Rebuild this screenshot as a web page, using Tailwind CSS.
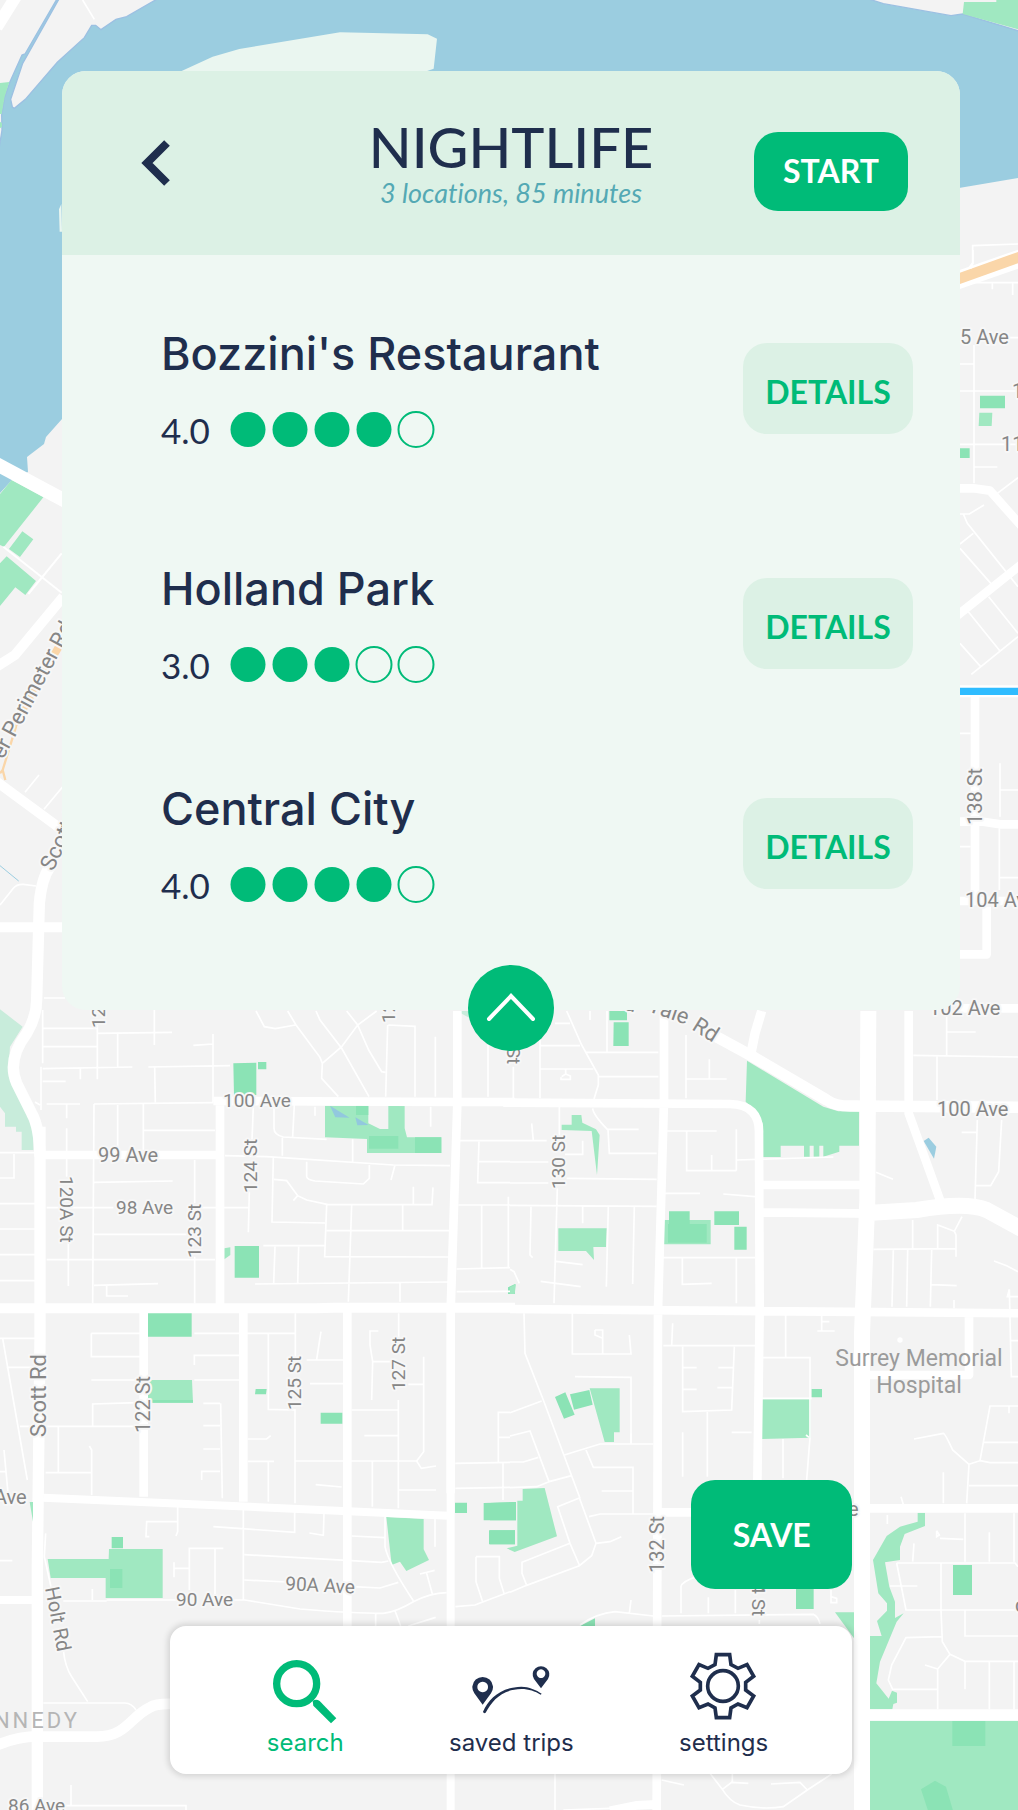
<!DOCTYPE html>
<html lang="en">
<head>
<meta charset="utf-8">
<meta name="viewport" content="width=device-width, initial-scale=1">
<title>Nightlife trip</title>
<script src="https://cdn.jsdelivr.net/npm/@tailwindcss/browser@4"></script>
</head>
<body class="bg-[#f3f3f3] font-['Inter',sans-serif] text-[#1f2e4d]">
<div class="relative isolate flex min-h-screen flex-col overflow-hidden pr-[58px] pl-[62px]">

  <!-- Map backdrop -->
  <svg class="absolute inset-0 -z-10 h-full w-full" viewBox="0 0 1018 1810" preserveAspectRatio="xMidYMid slice" fill="none" aria-label="Map of Surrey">
    <rect width="1018" height="1810" fill="#f3f3f3"/>
    <path fill="#9bcde0" d="M0 0H1018V178L900 198L62 419L46 437L44 444L27 457L28 472L12 480L0 493Z"/>

    <!-- north west shore -->
    <g transform="scale(.33333)">
      <g fill="#f3f3f3" stroke="#9cc0e2" stroke-width="4">
        <path d="M-5 -5H172L75 162L66 165L30 245L14 290L5 345L6 390L-5 460Z"/>
        <path d="M178 -5H475L380 50L348 58L303 89L287 76H275L253 113L172 187L76 298L43 325L37 321L32 298L68 190Z"/>
      </g>
      <path fill="#eaf6f0" d="M540 215L638 170L718 147L1020 97L1283 103L1311 116L1301 206L1275 215ZM184 612L177 628L179 695H186Z"/>
      <path fill="#a0e8c1" d="M0 249L28 246L14 290L5 342H0ZM0 365L6 370V380L0 385Z"/>
      <path stroke="#fff" stroke-width="36" d="M60 -30L-10 82"/>
      <path stroke="#fff" stroke-width="5" d="M248 0L283 58"/>
    </g>

    <!-- north east shore -->
    <g transform="translate(640 0) scale(.33333)">
      <path fill="#f3f3f3" stroke="#9cc0e2" stroke-width="4" d="M680 -5L730 11L933 47L968 42L1140 94V-5Z"/>
      <path fill="#a0e8c1" d="M972 6H1069V-3H1134V88L968 42Z"/>
      <g stroke="#fff"><path stroke-width="5" d="M1134 732L998 737V788L985 806M985 848H1134"/><path stroke-width="54" d="M940 845L1150 772"/></g>
      <path stroke="#fad6a9" stroke-width="32" d="M940 842L1150 767"/>
    </g>

    <!-- west edge -->
    <g transform="translate(0 250) scale(.33333)">
      <path fill="#a0e8c1" d="M35 690L130 742L12 890L0 885V732ZM67 844L100 868L60 921L27 897ZM20 919L108 993L76 1035L46 1012L0 1068V940Z"/>
      <g stroke="#fff">
        <path stroke-width="42" d="M-20 637L200 755"/>
        <path stroke-width="6" d="M10 890L185 1028M185 910L85 1032"/>
        <path stroke-width="30" d="M190 1040L45 1215L-10 1250"/>
      </g>
      <path fill="#fad6a9" d="M180 1160L90 1320L60 1390L70 1400L112 1320L190 1190Z"/>
    </g>
    <g transform="translate(0 690) scale(.33333)">
      <path stroke="#fad6a9" stroke-width="16" d="M100 10L30 130"/>
      <path stroke="#fad6a9" stroke-width="7" d="M48 110L8 240L0 250M8 240L16 270"/>
      <path stroke="#9bcde0" stroke-width="3" d="M0 527L56 573"/>
      <path fill="#c8ecdb" d="M0 958L68 1010L30 1070L25 1140L60 1200L100 1290V1380H65V1325H48V1310H15V1270L0 1250Z"/>
      <g stroke="#fff" stroke-linejoin="round">
        <path stroke-width="30" d="M-10 275L190 422M0 712H190"/>
        <path stroke-width="34" d="M150 530Q125 565 118 640L110 930Q110 980 80 1030Q20 1110 50 1180L95 1270Q118 1310 120 1400"/>
        <path stroke-width="5" d="M75 307L117 255M132 358L190 288M0 645L40 595Q50 582 70 583L108 588M132 924H195"/>
      </g>
    </g>

    <!-- east edge -->
    <g transform="translate(510 250) scale(.33333)">
      <path fill="#8be3b5" d="M1410 437H1485V475H1410ZM1340 595H1379V624H1340Z"/>
      <path fill="#a0e8c1" d="M1408 488H1447L1445 528H1406Z"/>
      <g stroke="#fff">
        <path stroke-width="5" d="M1389 0V40L1382 55M1447 100V118M1508 100V135M1486 263H1524M1392 285V700M1350 342H1392M1350 423H1524M1350 583H1524M1392 651H1462M1524 683L1462 730M1350 792H1378L1422 765M1360 792L1372 820L1524 1010M1350 882L1390 850M1350 895L1445 1003M1436 1040L1524 1150M1375 1085L1470 1203M1350 1180L1412 1250M1384 1273L1524 1160"/>
        <path stroke-width="26" stroke-linejoin="round" d="M1340 715H1390L1440 722L1540 835M1340 1098L1540 938"/>
        <path stroke-width="36" d="M1340 1324H1540"/>
      </g>
      <path stroke="#2fbcff" stroke-width="22" d="M1340 1324H1540"/>
    </g>
    <g transform="translate(510 690) scale(.33333)" stroke="#fff">
      <path stroke-width="26" stroke-linejoin="round" d="M1395 20V640M1340 395H1420L1470 403H1540M1340 633H1540M1430 650V793H1340"/>
      <path stroke-width="26" d="M1340 955H1540"/>
      <path stroke-width="5" d="M1470 220V380M1470 300H1524M1468 415V600M1468 563H1524M1350 130H1382M1350 470H1382"/>
    </g>

    <!-- central west blocks -->
    <g transform="translate(0 1000) scale(.33333)">
      <path fill="#a0e8c1" d="M975 317H1105V370L1140 387H1165V317H1214V385L1221 412H1324V459H1101V417L975 412ZM673 745L691 742V765L673 778ZM444 1140H576L579 1208H444Z"/>
      <path fill="#8be3b5" d="M700 190L769 188V285H702ZM774 186H799V208H774ZM1068 317H1105V345H1068ZM1107 408H1195V446H1107ZM1245 412H1324V459H1245ZM704 738H777V833H704ZM444 939H575V1010H444ZM767 1167H800L798 1183H765ZM1524 862L1545 852V882H1524Z"/>
      <path fill="#c8ecdb" d="M1370 33L1420 60V33Z"/>
      <path fill="#92c8de" d="M990 317L1049 353L1006 352ZM1066 352L1106 375L1072 376Z"/>
      <g stroke="#fff" stroke-width="5">
        <path d="M128 85H292M292 60V238M128 30V190M128 140H290M292 100L516 97M353 100V200M463 30V135M128 206L397 201M445 201L690 197M241 205V238M128 244H197M580 136L639 132M639 102V305M464 200L466 307M123 200V330M105 306L120 315M140 312H240M282 312L640 308M200 312V355M200 385V460M282 312L278 910M353 315V450M430 312V450M432 391H645M200 475V530M205 720V858M140 623H340M282 547L518 543M584 480V610M584 770V910M600 623H745M282 703H560M140 779H645M282 856L474 851M320 856V888H384M0 458H105M42 462V534H0M0 611H105M0 687H105M0 764H105M0 842H105"/>
        <path d="M768 33L793 80L826 86L886 75M863 33L888 75L960 172L967 190L965 235L1015 290M948 33L960 60L1025 145L1107 290M1130 33L1073 75L1025 140L967 190M1040 33L1073 75L1106 150L1145 215L1156 217M1163 75L1157 290M1165 75L1245 79V290M1306 110V290M760 320L756 420M748 575L745 697M883 315L878 410M822 320V385Q822 405 850 411L980 418M945 320V347M1292 320V380M675 467L800 470L1180 495L1350 497M847 413V467M1058 418V487M820 472L816 666L975 669M822 538L860 542L893 587L920 600L985 614H1296L1299 562M893 587L880 602M920 485V530Q922 540 945 543L1090 552L1108 535V495M1185 495L1173 540M1240 560V612M980 615L974 770L1345 771M790 737L975 737M980 692H1348M1055 615L1045 905M1208 615V690M825 740L821 850M896 740L893 850M765 852L1345 846M1200 850V905"/>
        <path d="M1380 422H1530M1437 425L1433 548H1530M1437 485H1530M1375 615H1530M1445 615V805M1370 807L1530 803M1525 590V800M1370 875L1530 874M1464 50V290"/>
        <path d="M274 1000H420M274 1000V1070H420M274 1140H420M583 1000H885M583 1095V1066H720M583 1140H720M886 940V1100M805 1000V1200M0 1015H105M8 1015L40 1200L82 1440M20 1102H105M963 995L950 1078M920 1080H1030M1135 993H1110V1035L1118 1085L1115 1200M1118 1085H1180M1196 940V1020M1271 1070V1200M930 1151H1030M1225 1153H1271"/>
      </g>
      <g stroke="#fff">
        <path stroke-width="26" d="M640 303L1380 306H1545M130 465H660M660 305V925M1372 33V310L1352 930V1480M431 930V1490M730 935V1505M1042 935V2020"/>
        <path stroke-width="30" d="M0 925H950L1000 923H1545"/>
        <path stroke-width="34" d="M120 380V1020L112 1700V2450"/>
      </g>
    </g>

    <!-- central east blocks -->
    <g transform="translate(510 1000) scale(.33333)">
      <path fill="#a0e8c1" d="M711 182L940 320L985 334H1047V437H988V455L940 470V437H928V470H911V437H899V470H882V437H812V471H758V370L740 335L707 305ZM155 374H185V345H214L217 368L258 388L269 405L261 525L245 393L155 390ZM145 685H290L288 741H250L252 780L228 753H145ZM462 660H602V733H462ZM239 1165H329V1297H312V1326H284ZM752 1198H902V1313L752 1317ZM0 862L18 852L14 882H0Z"/>
      <path fill="#8be3b5" d="M298 33H351V61H298ZM311 67H356V138H310ZM477 634H539V672H590V728H474V672H477ZM613 634H687V675H613ZM673 680H710V749H673ZM905 1167H936V1192H905ZM135 1191L166 1177L194 1244L162 1256ZM180 1183L238 1170L248 1214L192 1229Z"/>
      <path fill="#9bcde0" d="M1241 423L1256 413L1279 440L1272 476Z"/>
      <g stroke="#fff" stroke-width="5">
        <path d="M170 33L215 135L265 225V255L252 297M90 60V295M90 137H210M90 207H250M135 70H180M240 33V60M291 33V155M225 157H445M265 230H445M10 200V295M528 105V295M528 237H650M598 178V237M153 232V238H181V228L167 222L155 230M167 205V222M148 320V410M248 325Q250 345 292 388H386M294 388L298 460H440M65 370L70 422M0 422H110M218 422V463H165M0 486H115M170 535L440 538M0 549H115M0 616L440 619M142 565L132 910M63 620L60 765L68 773M218 620V670M295 620L289 860M373 620L368 852M138 784L218 794M92 844L212 860M0 808L12 815L28 850M470 393H620M530 395V512H679M679 388V512M605 465V510M680 480L970 471M465 580H570M640 582L735 590M460 773H735M517 773V853L605 850M679 773V910"/>
        <path d="M1310 40V165M1310 96H1397M1210 166L1524 171M1281 168V300M1402 360L1395 600M1355 397H1402M1475 360L1466 515L1442 557H1397M1098 517L1149 538M1090 748L1337 746M1208 660V745M1283 745V675L1333 694L1356 650M1333 694L1338 705V770M1150 750L1146 920M1193 750L1190 920M1265 750L1261 920M1265 854L1340 857M1332 900V925M1452 783L1490 797L1524 815M1498 868L1492 890H1524M1498 868L1504 1130H1524M1504 1022H1524"/>
        <path d="M42 940L45 1060L100 1200L210 1495M187 940V1062H363L358 1005M255 990V1005L278 1015V1060M255 990H278V1015M195 1130L363 1132V1330M488 970L485 1037M460 1037H735M518 1040V1235L665 1230L673 1040M518 1103H560M625 1103H670M518 1168H560M622 1163H670M827 940V1073M755 1073H900V1313L890 1440M935 945V992M935 965H958M922 993H974M752 1195H905"/>
      </g>
      <circle cx="1170" cy="1020" r="8" fill="#fff"/>
      <g stroke="#fff" stroke-linejoin="round">
        <path stroke-width="26" d="M-20 308L660 312Q750 315 747 400L749 930L740 1600M462 33V300L444 930L440 2450M0 927L1540 940M760 555H1060M760 637L1100 641M1196 33V340L1292 605M1377 950V1125H1060"/>
        <path stroke-width="28" d="M755 33L735 100L722 165"/>
        <path stroke-width="34" d="M600 100L720 165L950 300Q975 318 1020 318L1540 322"/>
        <path stroke-width="48" d="M1075 33L1072 600L1056 1000V2450M1085 638L1220 630Q1370 605 1430 630L1540 690"/>
      </g>
    </g>

    <!-- southern west blocks -->
    <g transform="translate(0 1400) scale(.33333)">
      <path fill="#a0e8c1" d="M143 477H326L327 447H488V594H317V534H152ZM1159 351L1271 357V448L1287 480L1219 513L1200 485L1175 495ZM89 306H99V365Z"/>
      <path fill="#8be3b5" d="M335 411H369V445H335ZM330 507H367V564H330ZM962 38H1027V71H962ZM1365 308H1401V339H1365ZM458 0H579V8H458ZM1451 309L1548 306V361H1451ZM1467 391H1545V433H1467Z"/>
      <g stroke="#fff" stroke-width="5">
        <path d="M60 79H410M278 79V12L415 8M175 80V215M137 218H275M275 285V150L268 138M0 215H18L12 150L25 290M610 10H660M662 10L667 295M610 77H660M610 147H660M605 240V214H660M743 117H800L812 107M743 184H822M805 185V305M805 0V28L885 30V310M885 183H1250L1264 205L1308 198M1250 183L1271 155V0M1055 30H1195M1195 0V325M1093 107H1195M1117 185V320M1195 270H1308M947 254L1025 261M1366 190L1530 187M1366 265L1530 262M1530 37H1495V185M1495 112H1530M1509 190V300"/>
        <path d="M533 320V395L528 408M533 365H440L438 410H448M640 380L884 397V335M730 325V598M972 340L970 406L928 399M1055 408L1155 413M733 464L1145 487L1165 483M1155 350V440Q1165 490 1240 602M733 540L860 546M1060 560L1140 564L1195 547M670 445H568V570M645 445V585M522 487V532M522 505H568M1305 357V440M190 603H320M277 567V600M320 600H530M690 600H735L900 627Q1060 640 1150 640Q1190 635 1240 605Q1290 580 1340 578M1260 522L1304 511M1280 520L1297 582M1127 640V680M1185 632L1202 678M1225 678L1307 652M1366 620L1425 615L1450 605L1530 575M1428 470H1498V535L1512 580M1428 470V545L1448 605M0 482H37M137 400L133 470L155 570M190 750Q195 800 215 830L263 905M130 909H375Q395 910 408 930M213 1155V1217M130 1217H558V1230"/>
      </g>
      <g stroke="#fff">
        <path stroke-width="24" d="M130 293L1345 347M0 600H110M1352 0V680M1352 1115V1235"/>
        <path stroke-width="32" d="M-20 1040Q60 1005 130 1010H290C380 1010 390 950 450 922Q470 910 520 912"/>
      </g>
    </g>

    <!-- southern east blocks -->
    <g transform="translate(510 1400) scale(.33333)">
      <path fill="#a0e8c1" d="M38 267L104 264L141 409L14 456L-10 445L22 437V302H38ZM1223 338H1245V378L1184 402L1170 440V480L1125 487L1138 560L1155 605V654L1181 640L1160 665L1110 785L1099 850L1136 896L1146 872L1161 878V908L1150 912L1147 928H1080V708H1115L1101 663L1131 632V610L1105 580L1089 480L1130 408L1170 380L1223 365ZM1080 962H1540V1240H1080ZM975 637H1032V715Z"/>
      <path fill="#8be3b5" d="M-60 309L18 306V361H-60ZM-60 391H15V433H-60ZM1329 495H1386V585H1329ZM1327 963H1426V1038H1327ZM858 560H911V627H858ZM210 678L255 655V678ZM1233 1168L1275 1142L1308 1160L1330 1235H1255Z"/>
      <g stroke="#fff" stroke-width="5">
        <path d="M0 38L95 3M0 108L60 93L117 245L185 227M0 186H40L85 172M0 263L80 260L117 245M163 165L270 132H430M228 150L250 202H369V340M275 273H369M363 100V130M210 293L143 320L180 430L208 495M208 293L258 430L245 467L208 497L50 556L36 520V487L180 430M258 430L300 425L334 410M237 350L270 342H430M0 577L50 556M518 97V230M592 35V230M665 97H725M819 117V235M888 105L897 112"/>
        <path d="M513 640V560Q515 545 560 530M595 592V640M676 570V640M455 648L910 643Q925 650 930 672M363 600L358 640M210 675Q260 640 315 635L430 648M963 570V608H980V595L963 590M748 660V672"/>
        <path d="M1212 117L1300 100Q1305 100 1328 150L1377 193L1370 310M1377 193L1410 182L1440 18H1524M1410 182L1440 188H1524M1420 127H1524M1377 257H1524M1300 217V310M1497 18V40M1173 290L1182 320M1132 345V372M1365 340V485M1280 392V410L1288 405L1280 392M1290 415L1360 418M1212 430L1208 485M1160 489H1515L1524 500M1160 489L1188 630H1524M1140 558H1222M1293 490V630L1297 725L1320 763L1283 807V928M1438 397V485M1512 340V485M1365 632V708H1524M1297 710L1188 713L1145 795L1135 840L1148 868H1283M1320 763L1365 784H1524M1365 784V868M1245 795L1283 807M1438 784V928M1512 784V928"/>
        <path d="M455 1140L522 1155M600 1120L637 1168L665 1147L715 1150M667 1120V1147M637 1168Q660 1205 690 1215Q760 1230 820 1220L892 1170L965 1122M783 1152L870 1147L892 1170M135 1120V1230M160 1230L300 1225"/>
      </g>
      <path stroke="#fff" stroke-width="26" d="M300 1232L380 1216L440 1213M450 337H560M1075 325H1540"/>
      <path stroke="#fff" stroke-width="34" d="M1075 945H1540"/>
    </g>

    <!-- street names -->
    <g class="font-['Roboto',sans-serif]" fill="#868686" stroke="#f7f7f7" stroke-width="4" stroke-linejoin="round" paint-order="stroke">
      <g class="text-[20px]">
        <text x="960" y="344">5 Ave</text>
        <text x="1012" y="398">1</text>
        <text x="1001" y="451">11</text>
        <text x="965" y="907">104 Ave</text>
        <text x="929" y="1015">102 Ave</text>
        <text x="937" y="1116">100 Ave</text>
        <text x="98" y="1162">99 Ave</text>
        <text x="-6" y="1504">Ave</text>
        <text x="848" y="1516">e</text>
        <text x="1015" y="1612">c</text>
        <text transform="translate(982 825) rotate(-90)">138 St</text>
        <text transform="translate(150 1433) rotate(-90)">122 St</text>
        <text transform="translate(664 1573) rotate(-90)">132 St</text>
        <text transform="translate(45 1588) rotate(79)">Holt Rd</text>
        <text transform="translate(-5 1448) rotate(-97)">St</text>
      </g>
      <g class="text-[19px]">
        <text x="223" y="1107">100 Ave</text>
        <text x="116" y="1214">98 Ave</text>
        <text x="176" y="1606">90 Ave</text>
        <text x="285" y="1590" transform="rotate(3 285 1590)">90A Ave</text>
        <text x="8" y="1812">86 Ave</text>
        <text transform="translate(257 1193) rotate(-90)">124 St</text>
        <text transform="translate(201 1258) rotate(-90)">123 St</text>
        <text transform="translate(60 1176) rotate(90)">120A St</text>
        <text transform="translate(565 1189) rotate(-90)">130 St</text>
        <text transform="translate(301 1410) rotate(-90)">125 St</text>
        <text transform="translate(405 1391) rotate(-90)">127 St</text>
        <text transform="translate(752 1562) rotate(90)">134 St</text>
        <text transform="translate(507 1010) rotate(90)">128 St</text>
        <text transform="translate(105 1028) rotate(-90)">121 St</text>
        <text transform="translate(395 1023) rotate(-90)">126 St</text>
      </g>
      <g class="text-[22px]">
        <text transform="translate(46 1437) rotate(-90)">Scott Rd</text>
        <text transform="translate(53 872) rotate(-65)">Scott Rd</text>
        <text transform="translate(3 760) rotate(-62)">er Perimeter Rd</text>
        <text transform="translate(603 1004) rotate(15)">Old</text>
        <text transform="translate(647 1011) rotate(19)">Yale</text>
        <text transform="translate(691 1029) rotate(32)">Rd</text>
      </g>
    </g>
    <g class="font-['Roboto',sans-serif] text-[23px]" fill="#9b9b9b" text-anchor="middle">
      <text x="919" y="1366">Surrey Memorial</text>
      <text x="919" y="1393">Hospital</text>
    </g>
    <text class="font-['Roboto',sans-serif] text-[22px] tracking-[3px]" x="80" y="1728" fill="#b5b5b5" text-anchor="end">KENNEDY</text>
  </svg>

  <!-- Trip card -->
  <main class="relative mt-[71px] rounded-3xl bg-[#eff8f3]">
    <header class="grid h-[184px] grid-cols-[1fr_auto_1fr] items-center rounded-t-3xl bg-[#dcf1e5] px-[52px]">
      <button type="button" aria-label="Back" class="ml-[26px] justify-self-start">
        <svg class="h-12 w-8" viewBox="0 0 32 48" fill="none" stroke="#1f2e4d" stroke-width="8"><path d="M27 4L7 24L27 44"/></svg>
      </button>
      <div class="pt-1 text-center font-['Lato',sans-serif] [font-variant-ligatures:none]">
        <h1 class="text-[56px] leading-[56px] font-medium">NIGHTLIFE</h1>
        <p class="text-[27px] leading-9 text-[#54a9b4] italic">3 locations, 85 minutes</p>
      </div>
      <button type="button" class="mt-4 h-[79px] w-[154px] justify-self-end rounded-3xl bg-[#00bb78] font-['Lato',sans-serif] text-[32px] font-bold text-white">START</button>
    </header>

    <ul class="flex flex-col pt-[73px] pr-[47px] pb-[107px] pl-[99px]">
      <li class="flex items-center justify-between">
        <div>
          <h2 class="text-[45px] leading-[52px] font-medium">Bozzini's Restaurant</h2>
          <div class="mt-[31px] flex items-center" role="img" aria-label="4 out of 5">
            <span class="w-[69px] font-['Lato',sans-serif] text-[35px] leading-9">4.0</span>
            <svg class="h-[37px] w-[206px]" viewBox="0 0 206 37" fill="#00bb78"><circle cx="18" cy="18.500" r="17.500"/><circle cx="60" cy="18.500" r="17.500"/><circle cx="102" cy="18.500" r="17.500"/><circle cx="144" cy="18.500" r="17.500"/><circle cx="186" cy="18.500" r="17.500" fill="none" stroke="#00bb78" stroke-width="2"/></svg>
          </div>
        </div>
        <button type="button" class="h-[91px] w-[170px] rounded-3xl bg-[#dcf1e5] pt-2 font-['Lato',sans-serif] text-[32px] font-bold text-[#00bb78]">DETAILS</button>
      </li>
      <li class="mt-[115px] flex items-center justify-between">
        <div>
          <h2 class="text-[45px] leading-[52px] font-medium">Holland Park</h2>
          <div class="mt-[31px] flex items-center" role="img" aria-label="3 out of 5">
            <span class="w-[69px] font-['Lato',sans-serif] text-[35px] leading-9">3.0</span>
            <svg class="h-[37px] w-[206px]" viewBox="0 0 206 37" fill="#00bb78"><circle cx="18" cy="18.500" r="17.500"/><circle cx="60" cy="18.500" r="17.500"/><circle cx="102" cy="18.500" r="17.500"/><g fill="none" stroke="#00bb78" stroke-width="2"><circle cx="144" cy="18.500" r="17.500"/><circle cx="186" cy="18.500" r="17.500"/></g></svg>
          </div>
        </div>
        <button type="button" class="h-[91px] w-[170px] rounded-3xl bg-[#dcf1e5] pt-2 font-['Lato',sans-serif] text-[32px] font-bold text-[#00bb78]">DETAILS</button>
      </li>
      <li class="mt-[100px] flex items-center justify-between">
        <div>
          <h2 class="text-[45px] leading-[52px] font-medium">Central City</h2>
          <div class="mt-[31px] flex items-center" role="img" aria-label="4 out of 5">
            <span class="w-[69px] font-['Lato',sans-serif] text-[35px] leading-9">4.0</span>
            <svg class="h-[37px] w-[206px]" viewBox="0 0 206 37" fill="#00bb78"><circle cx="18" cy="18.500" r="17.500"/><circle cx="60" cy="18.500" r="17.500"/><circle cx="102" cy="18.500" r="17.500"/><circle cx="144" cy="18.500" r="17.500"/><circle cx="186" cy="18.500" r="17.500" fill="none" stroke="#00bb78" stroke-width="2"/></svg>
          </div>
        </div>
        <button type="button" class="h-[91px] w-[170px] rounded-3xl bg-[#dcf1e5] pt-2 font-['Lato',sans-serif] text-[32px] font-bold text-[#00bb78]">DETAILS</button>
      </li>
    </ul>

    <button type="button" aria-label="Collapse" class="absolute -bottom-[41px] left-1/2 flex size-[86px] -translate-x-1/2 items-center justify-center rounded-full bg-[#00bb78]">
      <svg class="h-8 w-[52px]" viewBox="0 0 52 32" fill="none" stroke="#fff" stroke-width="4" stroke-linecap="round"><path d="M4 27L26 4L48 27"/></svg>
    </button>
  </main>

  <!-- Save and bottom navigation -->
  <div class="mx-auto mt-auto flex w-[76%] flex-col gap-[37px] pt-16 pb-9">
    <button type="button" class="h-[109px] w-[161px] self-end rounded-3xl bg-[#00bb78] font-['Lato',sans-serif] text-[32px] font-bold text-white">SAVE</button>
    <nav class="flex h-[148px] justify-between rounded-2xl bg-white pt-[26px] pr-[84px] pl-[97px] text-[24px] leading-[30px] shadow-[0_0_6px_2px_rgba(0,0,0,0.14)]">
      <a href="#search" class="flex flex-col items-center gap-1 text-[#00bb78]">
        <svg class="h-[72px] w-[70px]" viewBox="810 756 210 216"><circle cx="890" cy="851" r="60" fill="none" stroke="currentColor" stroke-width="22"/><path fill="currentColor" d="M938 903Q948 896 959 903L1009 955L993 970L940 917Z"/></svg>
        search
      </a>
      <a href="#saved" class="flex flex-col items-center gap-1">
        <svg class="h-[72px] w-[84px]" viewBox="1410 756 252 216" fill="currentColor" fill-rule="evenodd"><path d="M1451 914L1426 880A31 31 0 1 1 1476 880ZM1451 845a16 16 0 1 0 .1 0Z"/><path d="M1626 865L1605 837A25 25 0 1 1 1647 837ZM1626 808a13 13 0 1 0 .1 0Z"/><path d="M1452 935C1470 895 1505 862 1567 860C1590 860 1612 870 1628 881L1625 884C1608 874 1590 867 1567 867C1510 868 1480 900 1460 938Q1454 942 1452 935Z"/></svg>
        saved trips
      </a>
      <a href="#settings" class="flex flex-col items-center gap-1">
        <svg class="h-[72px] w-[72px]" viewBox="528 756 216 216" fill="none" stroke="currentColor" stroke-width="11"><path d="M613 764H653L657 794L678 805L705 794L725 829L701 847V870L725 888L705 923L678 912L657 924L653 953H613L609 924L588 912L561 923L541 888L565 870V847L541 829L561 794L588 805L609 794Z"/><circle cx="633" cy="858" r="46"/></svg>
        settings
      </a>
    </nav>
  </div>
</div>
</body>
</html>
